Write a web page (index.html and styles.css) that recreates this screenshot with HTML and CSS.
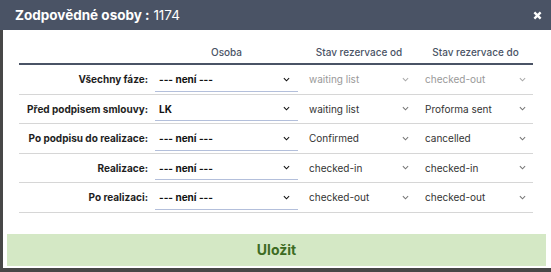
FILE: index.html
```html
<!DOCTYPE html>
<html lang="cs">
<head>
<meta charset="utf-8">
<link rel="stylesheet" href="styles.css">
</head>
<body>
<div class="modal">
  <div class="modal-header">
    <h1 class="title"><strong>Zodpovědné osoby :</strong> 1174</h1>
    <svg class="close" viewBox="0 0 10 10" aria-label="Zavřít"><path d="M1.5 1.5l7 7M8.5 1.5l-7 7"/></svg>
  </div>
  <div class="modal-body">
    <div class="grid">
      <div class="row head">
        <div class="cell lbl"></div>
        <div class="cell h">Osoba</div>
        <div class="cell h">Stav rezervace od</div>
        <div class="cell h">Stav rezervace do</div>
      </div>
      <div class="row">
        <div class="cell lbl">Všechny fáze:</div>
        <div class="cell"><div class="sel person"><span>--- není ---</span><svg class="chev" viewBox="0 0 8 5"><path d="M1 1l3 3 3-3"/></svg></div></div>
        <div class="cell"><div class="sel stav disabled"><span>waiting list</span><svg class="chev" viewBox="0 0 8 5"><path d="M1 1l3 3 3-3"/></svg></div></div>
        <div class="cell"><div class="sel stav disabled"><span>checked-out</span><svg class="chev" viewBox="0 0 8 5"><path d="M1 1l3 3 3-3"/></svg></div></div>
      </div>
      <div class="row">
        <div class="cell lbl">Před podpisem smlouvy:</div>
        <div class="cell"><div class="sel person"><span>LK</span><svg class="chev" viewBox="0 0 8 5"><path d="M1 1l3 3 3-3"/></svg></div></div>
        <div class="cell"><div class="sel stav"><span>waiting list</span><svg class="chev" viewBox="0 0 8 5"><path d="M1 1l3 3 3-3"/></svg></div></div>
        <div class="cell"><div class="sel stav"><span>Proforma sent</span><svg class="chev" viewBox="0 0 8 5"><path d="M1 1l3 3 3-3"/></svg></div></div>
      </div>
      <div class="row">
        <div class="cell lbl">Po podpisu do realizace:</div>
        <div class="cell"><div class="sel person"><span>--- není ---</span><svg class="chev" viewBox="0 0 8 5"><path d="M1 1l3 3 3-3"/></svg></div></div>
        <div class="cell"><div class="sel stav"><span>Confirmed</span><svg class="chev" viewBox="0 0 8 5"><path d="M1 1l3 3 3-3"/></svg></div></div>
        <div class="cell"><div class="sel stav"><span>cancelled</span><svg class="chev" viewBox="0 0 8 5"><path d="M1 1l3 3 3-3"/></svg></div></div>
      </div>
      <div class="row">
        <div class="cell lbl">Realizace:</div>
        <div class="cell"><div class="sel person"><span>--- není ---</span><svg class="chev" viewBox="0 0 8 5"><path d="M1 1l3 3 3-3"/></svg></div></div>
        <div class="cell"><div class="sel stav"><span>checked-in</span><svg class="chev" viewBox="0 0 8 5"><path d="M1 1l3 3 3-3"/></svg></div></div>
        <div class="cell"><div class="sel stav"><span>checked-in</span><svg class="chev" viewBox="0 0 8 5"><path d="M1 1l3 3 3-3"/></svg></div></div>
      </div>
      <div class="row">
        <div class="cell lbl">Po realizaci:</div>
        <div class="cell"><div class="sel person"><span>--- není ---</span><svg class="chev" viewBox="0 0 8 5"><path d="M1 1l3 3 3-3"/></svg></div></div>
        <div class="cell"><div class="sel stav"><span>checked-out</span><svg class="chev" viewBox="0 0 8 5"><path d="M1 1l3 3 3-3"/></svg></div></div>
        <div class="cell"><div class="sel stav"><span>checked-out</span><svg class="chev" viewBox="0 0 8 5"><path d="M1 1l3 3 3-3"/></svg></div></div>
      </div>
    </div>
    <button class="save">Uložit</button>
  </div>
</div>
</body>
</html>
```
FILE: styles.css
```css
* { box-sizing: border-box; }
html, body { margin: 0; padding: 0; }
body {
  background: #474747;
  width: 551px;
  height: 272px;
  overflow: hidden;
  font-family: Inter, "Noto Sans", sans-serif;
}
.modal { width: 551px; }
.modal-header {
  height: 30px;
  background: #4a5365;
  display: flex;
  align-items: center;
  padding: 0 9px 0 15px;
  color: #fff;
}
.title {
  margin: 0;
  font-size: 13.5px;
  font-weight: 400;
}
.title strong { font-weight: 700; }
.close {
  margin-left: auto;
  flex: 0 0 9px;
  width: 9px;
  height: 9px;
  fill: none;
  stroke: #fff;
  stroke-width: 2.6;
}
.modal-body {
  margin-left: 3px;
  background: #fff;
  height: 238px;
  padding: 12px 5px 0 4px;
}
.grid {
  margin: 0 13px 0 12px;
}
.row {
  display: grid;
  grid-template-columns: 133px 149px 116px 117px;
  height: 29.5px;
  border-bottom: 1px solid #d6d6d6;
  align-items: center;
}
.row.head {
  height: 23px;
  border-bottom: 2px solid #4a5365;
}
.cell { height: 100%; display: flex; align-items: center; }
.cell.h {
  justify-content: center;
  font-size: 10px;
  font-weight: 500;
  color: #4a5365;
  padding-bottom: 1px;
}
.cell.lbl {
  justify-content: flex-end;
  padding-right: 4px;
  font-size: 10px;
  font-weight: 700;
  color: #1e1e1e;
}
.sel {
  width: 100%;
  height: 100%;
  display: flex;
  align-items: center;
  justify-content: space-between;
  font-size: 10px;
}
.sel.person {
  margin-left: 3px;
  width: 143px;
  height: 24px;
  margin-top: 1px;
  padding: 0 8px 0 4px;
  border-bottom: 1px solid #b3bfdb;
  font-weight: 700;
  color: #111;
}
.sel.stav {
  padding: 0 8px 0 8px;
  color: #333;
  font-weight: 400;
}
.sel.disabled { color: #999; }
.chev {
  width: 7px;
  height: 5px;
  fill: none;
  stroke: currentColor;
  stroke-width: 1.2;
}
.sel.stav .chev { stroke: #777; }
.sel.stav.disabled .chev { stroke: #aaa; }
.save {
  display: block;
  width: 539px;
  height: 32px;
  margin-top: 21px;
  border: 0;
  background: #d4e8c5;
  color: #3d6b23;
  font-family: inherit;
  font-size: 14px;
  font-weight: 700;
}
```
